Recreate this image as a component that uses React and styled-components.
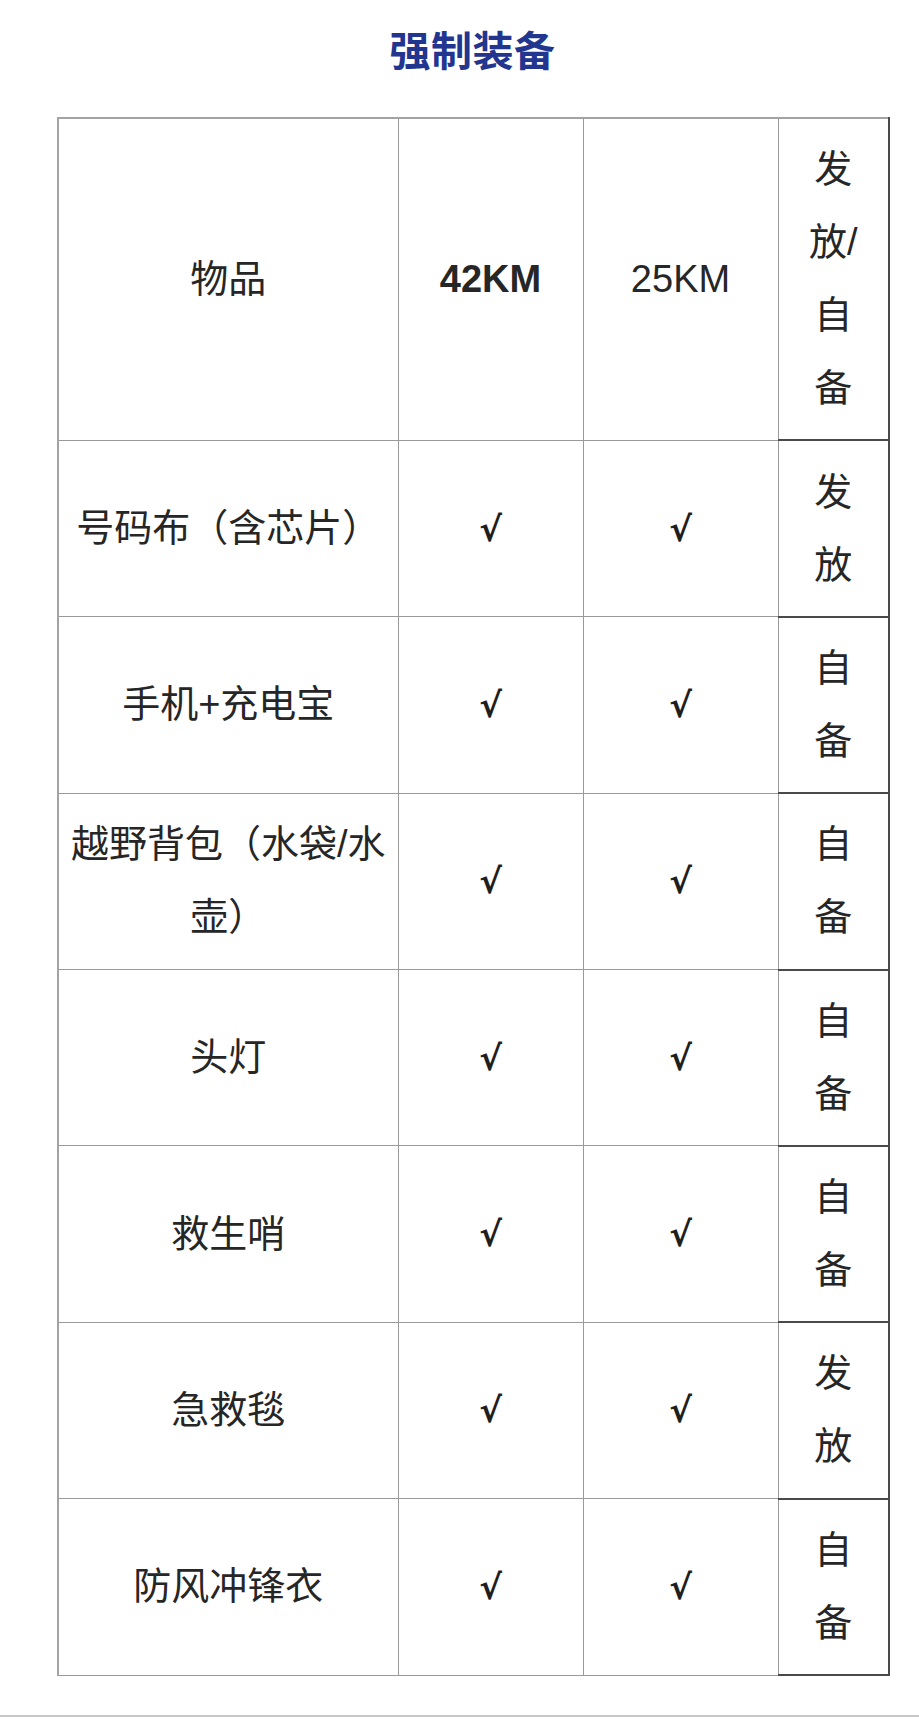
import React from 'react'
import styled, { createGlobalStyle } from 'styled-components'

const GlobalStyle = createGlobalStyle`
  html, body {
    margin: 0;
    padding: 0;
    background: #fff;
  }
  body {
    font-family: "Liberation Sans", "Noto Sans CJK SC", sans-serif;
    color: #262626;
  }
`

const Page = styled.div`
  width: 919px;
  min-height: 1719px;
  display: flex;
  flex-direction: column;
  box-sizing: border-box;
`

const Header = styled.div`
  margin-left: 57px;
  width: 831px;
  padding-top: 23px;
  height: 117px;
  box-sizing: border-box;
  text-align: center;
`

const Title = styled.h2`
  margin: 0;
  font-family: "Noto Sans CJK SC", sans-serif;
  font-size: 41px;
  line-height: 50px;
  font-weight: 700;
  color: #22358f;
  letter-spacing: 0.5px;
`

const Table = styled.table`
  margin-left: 57px;
  width: 831px;
  border-collapse: collapse;
  table-layout: fixed;
  border-top: 2px solid #a3a3a3;
  border-left: 2px solid #a3a3a3;
`

const Cell = styled.td`
  border: 1px solid #9a9a9a;
  padding: 14.2px ${p => (p.$narrow ? '22px' : '4px')};
  font-size: 38px;
  line-height: 73px;
  text-align: center;
  vertical-align: middle;
  font-weight: ${p => (p.$bold ? 700 : 400)};
  ${p => p.$narrow && `
    border-right: 2px solid #4a4a4a;
    border-bottom: 2px solid #4a4a4a;
  `}
`

const Check = styled.span`
  font-family: "DejaVu Sans", sans-serif;
  font-size: 34px;
  font-weight: 700;
  color: #1e1e1e;
`

const BottomLine = styled.div`
  margin-top: auto;
  margin-bottom: 2px;
  height: 2px;
  background: #c8c8c8;
`

const rows = [
  ['号码布（含芯片）', '发放'],
  ['手机+充电宝', '自备'],
  ['越野背包（水袋/水壶）', '自备'],
  ['头灯', '自备'],
  ['救生哨', '自备'],
  ['急救毯', '发放'],
  ['防风冲锋衣', '自备'],
]

export default function App() {
  return (
    <>
      <GlobalStyle />
      <Page>
        <Header>
          <Title>强制装备</Title>
        </Header>
        <Table>
          <colgroup>
            <col style={{ width: 340 }} />
            <col style={{ width: 185 }} />
            <col style={{ width: 195 }} />
            <col style={{ width: 111 }} />
          </colgroup>
          <tbody>
            <tr>
              <Cell>物品</Cell>
              <Cell $bold>42KM</Cell>
              <Cell>25KM</Cell>
              <Cell $narrow>发放/自备</Cell>
            </tr>
            {rows.map(([name, source]) => (
              <tr key={name}>
                <Cell>{name}</Cell>
                <Cell><Check>√</Check></Cell>
                <Cell><Check>√</Check></Cell>
                <Cell $narrow>{source}</Cell>
              </tr>
            ))}
          </tbody>
        </Table>
        <BottomLine />
      </Page>
    </>
  )
}
